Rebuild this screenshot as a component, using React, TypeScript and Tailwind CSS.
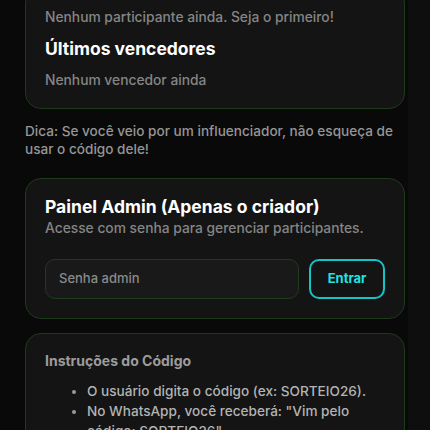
import React from "react";

export default function App() {
  return (
    <div
      className="flex min-h-[430px] w-full bg-[#090909] overflow-hidden"
      style={{ fontFamily: "Inter, 'Noto Sans', sans-serif" }}
    >
      <div className="flex-1 pl-[25px] pr-[3px]">
        <div className="mt-[-13px] rounded-[16px] border border-[#1d3a1a] bg-[#141414] px-[19px] pt-[19px] pb-[18px]">
          <p className="text-[13.8px] leading-[20px] font-medium text-[#858585]">
            Nenhum participante ainda. Seja o primeiro!
          </p>
          <h2 className="mt-[8px] text-[17.5px] leading-[28px] font-bold text-white">
            Últimos vencedores
          </h2>
          <p className="mt-[7px] text-[13.8px] leading-[20px] font-medium text-[#858585]">
            Nenhum vencedor ainda
          </p>
        </div>

        <p className="mt-[13px] text-[13.6px] leading-[18px] font-medium text-[#969696]">
          Dica: Se você veio por um influenciador, não esqueça de usar o código dele!
        </p>

        <div className="mt-[20px] rounded-[16px] border border-[#1d3a1a] bg-[#141414] px-[19px] pt-[17px] pb-[19px]">
          <h2 className="text-[17.5px] leading-[22px] font-bold text-white">
            Painel Admin (Apenas o criador)
          </h2>
          <p className="text-[13.8px] leading-[20px] font-medium text-[#858585]">
            Acesse com senha para gerenciar participantes.
          </p>
          <div className="mt-[21px] flex gap-[10px]">
            <div className="flex h-[40px] flex-1 items-center rounded-[10px] border border-[#1f3a1c] bg-[#191919] px-[13px] text-[13px] font-medium text-[#8a8a8a]">
              Senha admin
            </div>
            <button className="flex h-[40px] w-[76px] items-center justify-center rounded-[10px] border-2 border-[#14c4c6] text-[13px] font-bold text-[#1fe3e6]">
              Entrar
            </button>
          </div>
        </div>

        <div className="mt-[14px] rounded-[16px] border border-[#1d3a1a] bg-[#141414] px-[19px] pt-[17px] pb-5">
          <h3 className="text-[14px] leading-[20px] font-bold text-[#9c9c9c]">
            Instruções do Código
          </h3>
          <ul className="mt-[10px] list-disc pl-[42px] text-[13.6px] leading-[20px] font-medium text-[#b3b3b3] marker:text-[#9a9a9a]">
            <li>O usuário digita o código (ex: SORTEIO26).</li>
            <li>No WhatsApp, você receberá: "Vim pelo código: SORTEIO26"</li>
          </ul>
        </div>
      </div>
      <div className="w-[22px] bg-[#0e0e0e]" />
    </div>
  );
}
